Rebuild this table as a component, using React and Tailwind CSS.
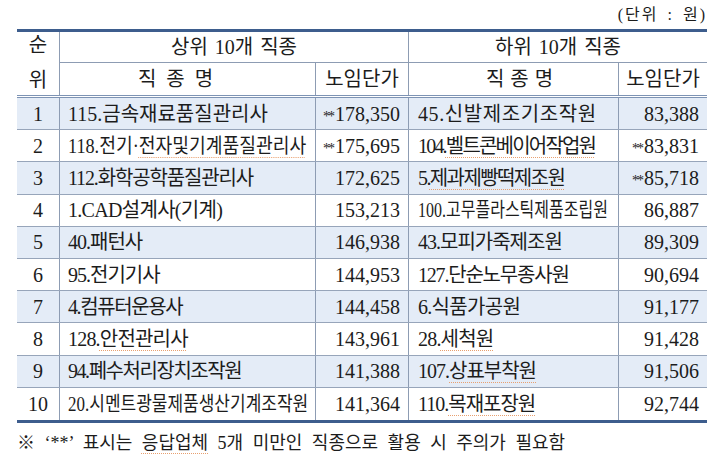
import React from "react";

const rows = [
  { r: "1", ln: ["115.금속재료품질관리사"], lt: "tracking-[0px]", lw: "178,350", la: true, rn: ["45.신발제조기조작원"], rt: "tracking-[0.6px]", rw: "83,388", ra: false },
  { r: "2", ln: ["118.전기·", "전자및기계품질관리사"], lt: "scale-x-[0.91] origin-left tracking-[0px]", lw: "175,695", la: true, rn: ["104.", "벨트콘베이어작업원"], rt: "tracking-[-1.8px]", rw: "83,831", ra: true },
  { r: "3", ln: ["112.화학공학품질관리사"], lt: "tracking-[-1.15px]", lw: "172,625", la: false, rn: ["5.", "제과제빵떡제조원"], rt: "tracking-[-1.6px]", rw: "85,718", ra: true },
  { r: "4", ln: ["1.CAD설계사(기계)"], lt: "tracking-[-0.7px]", lw: "153,213", la: false, rn: ["100.고무플라스틱제품조립원"], rt: "scale-x-[0.8] origin-left tracking-[0px]", rw: "86,887", ra: false },
  { r: "5", ln: ["40.패턴사"], lt: "tracking-[-1px]", lw: "146,938", la: false, rn: ["43.모피가죽제조원"], rt: "tracking-[-1px]", rw: "89,309", ra: false },
  { r: "6", ln: ["95.전기기사"], lt: "tracking-[-1px]", lw: "144,953", la: false, rn: ["127.단순노무종사원"], rt: "tracking-[-1.2px]", rw: "90,694", ra: false },
  { r: "7", ln: ["4.컴퓨터운용사"], lt: "tracking-[-1.4px]", lw: "144,458", la: false, rn: ["6.식품가공원"], rt: "tracking-[-0.7px]", rw: "91,177", ra: false },
  { r: "8", ln: ["128.", "안전관리사"], lt: "tracking-[-0.8px]", lw: "143,961", la: false, rn: ["28.", "세척원"], rt: "tracking-[-0.8px]", rw: "91,428", ra: false },
  { r: "9", ln: ["94.폐수처리장치조작원"], lt: "tracking-[-1.45px]", lw: "141,388", la: false, rn: ["107.", "상표부착원"], rt: "tracking-[-1px]", rw: "91,506", ra: false },
  { r: "10", ln: ["20.시멘트광물제품생산기계조작원"], lt: "scale-x-[0.85] origin-left tracking-[0px]", lw: "141,364", la: false, rn: ["110.", "목재포장원"], rt: "tracking-[-1px]", rw: "92,744", ra: false },
];

const ul = "underline decoration-dotted decoration-[#e8a070] underline-offset-[4px] decoration-1";

function Name({ parts, tracking }) {
  return (
    <span className={"inline-block whitespace-nowrap " + tracking}>
      {parts[0]}
      {parts[1] ? <span className={ul}>{parts[1]}</span> : null}
    </span>
  );
}

function Wage({ v, a, last }) {
  return (
    <div className={"flex items-center justify-end pr-[8px] whitespace-nowrap " + (last ? "" : "border-r border-[#8d9cb3]")}>
      <span>
        {a ? <span className="text-[14px] tracking-[-2px] mr-[2px]">**</span> : null}
        {v}
      </span>
    </div>
  );
}

export default function App() {
  return (
    <div className="w-[719px] h-[460px] bg-white text-[#1c1c1c] font-['Liberation_Serif','Noto_Sans_CJK_KR',serif] overflow-hidden">
      <div className="h-[29px] flex items-center justify-end pr-[12px] pt-[1px] text-[16px] tracking-[2px] [word-spacing:3px]">
        (단위 : 원)
      </div>
      <div className="ml-[17px] w-[690px] border-t-[3px] border-b-[3px] border-[#3d5d8d] text-[20px]">
        <div className="grid grid-cols-[43px_256px_93px_210px_88px] grid-rows-[31px_32px] border-b-[3px] border-double border-b-[#7d93b4]">
          <div className="row-span-2 border-r border-[#8d9cb3] flex flex-col items-center justify-between pt-[3px] pb-[5px] leading-none">
            <span>순</span>
            <span>위</span>
          </div>
          <div className="col-span-2 border-r border-b border-[#8d9cb3] flex items-center justify-center [word-spacing:2px]">
            상위 10개 직종
          </div>
          <div className="col-span-2 border-b border-[#8d9cb3] flex items-center justify-center [word-spacing:2px]">
            하위 10개 직종
          </div>
          <div className="border-r border-[#8d9cb3] flex items-center justify-center pr-[24px] [word-spacing:5px]">직 종 명</div>
          <div className="border-r border-[#8d9cb3] flex items-center justify-center">노임단가</div>
          <div className="border-r border-[#8d9cb3] flex items-center justify-center pl-[12px] [word-spacing:1px]">직 종 명</div>
          <div className="flex items-center justify-center">노임단가</div>
        </div>
        {rows.map((row, i) => (
          <div
            key={row.r}
            className={
              "grid grid-cols-[43px_256px_93px_210px_88px] h-[32.2px] " +
              (i % 2 === 0 ? "bg-[#e4ecf7] " : "bg-white ") +
              (i < rows.length - 1 ? "border-b border-[#97a5ba]" : "")
            }
          >
            <div className="flex items-center justify-center border-r border-[#8d9cb3]">{row.r}</div>
            <div className="pl-[8px] flex items-center border-r border-[#8d9cb3] overflow-hidden">
              <Name parts={row.ln} tracking={row.lt} />
            </div>
            <Wage v={row.lw} a={row.la} />
            <div className="pl-[9px] flex items-center border-r border-[#8d9cb3] overflow-hidden">
              <Name parts={row.rn} tracking={row.rt} />
            </div>
            <Wage v={row.rw} a={row.ra} last />
          </div>
        ))}
      </div>
      <div className="ml-[17px] mt-[7px] text-[18px] [word-spacing:5px] whitespace-nowrap">
        ※ ‘**’ 표시는 <span className={ul}>응답업체</span> 5개 미만인 직종으로 활용 시 주의가 필요함
      </div>
    </div>
  );
}
